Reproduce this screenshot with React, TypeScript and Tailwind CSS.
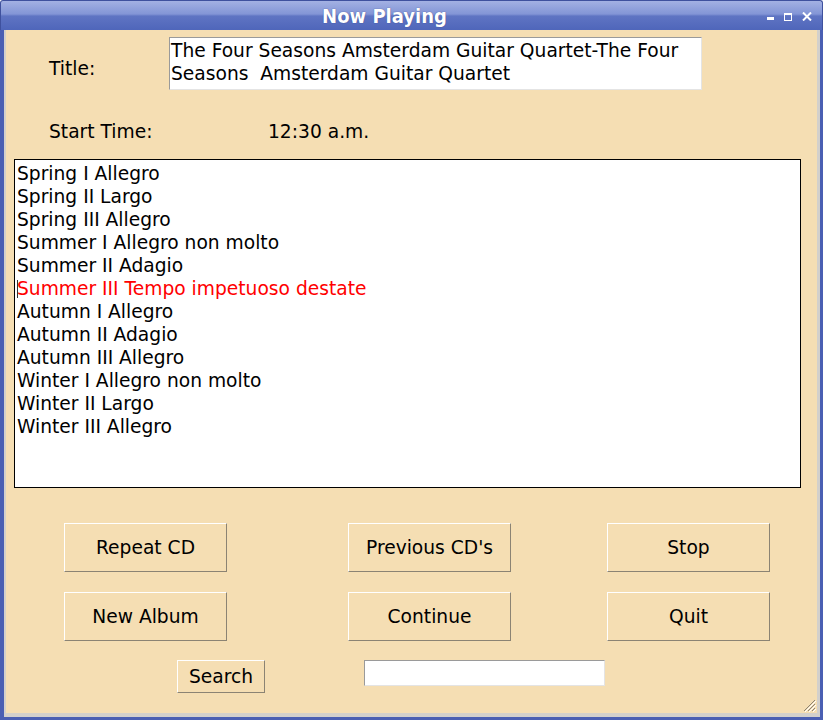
import type { ReactNode } from "react";

const tracks = [
  "Spring I Allegro",
  "Spring II Largo",
  "Spring III Allegro",
  "Summer I Allegro non molto",
  "Summer II Adagio",
  "Summer III Tempo impetuoso destate",
  "Autumn I Allegro",
  "Autumn II Adagio",
  "Autumn III Allegro",
  "Winter I Allegro non molto",
  "Winter II Largo",
  "Winter III Allegro",
];

const current = 5;

function RaisedButton({ children, className }: { children: ReactNode; className: string }) {
  return (
    <button
      type="button"
      className={`flex items-center justify-center border border-t-white border-l-white border-r-[#8b8373] border-b-[#8b8373] bg-[#f5deb3] text-black ${className}`}
    >
      {children}
    </button>
  );
}

export default function App() {
  return (
    <div
      className="w-[823px] h-[720px] flex flex-col overflow-hidden text-[18.67px] text-black"
      style={{ fontFamily: '"DejaVu Sans", Verdana, sans-serif' }}
    >
      {/* title bar */}
      <div className="relative h-[30px] shrink-0 rounded-t-[3px] flex items-center justify-center pr-[54px] bg-[linear-gradient(to_bottom,#a3b1e3_0%,#8395d6_45%,#5f74c3_52%,#4f66ba_100%)] border-x border-t border-[#3f519e]">
        <span
          className="text-white font-bold text-[20px] leading-none [text-shadow:0_0_1px_#2d3c80]"
          style={{ fontFamily: '"DejaVu Sans Condensed", "DejaVu Sans", sans-serif' }}
        >
          Now Playing
        </span>
        <div className="absolute right-[10px] top-[11px] flex items-end gap-[10px]">
          <span className="block w-[7px] h-[3px] bg-white mb-[1px]" />
          <span className="block w-[8px] h-[8px] border border-white border-t-2" />
          <svg width="10" height="9" viewBox="0 0 10 9">
            <path d="M1 0.5 L9 8.5 M9 0.5 L1 8.5" stroke="white" strokeWidth="2" />
          </svg>
        </div>
      </div>

      {/* window frame */}
      <div className="flex-1 flex flex-col bg-[#4a5fb3] pl-[4px] pr-[3px] pb-[3px]">
        <div className="relative flex-1 flex flex-col bg-[#f5deb3] border-l-2 border-r-[3px] border-b-4 border-[#d3d0cb]">
          {/* title row */}
          <div className="flex items-start mt-[7px]">
            <div className="w-[163px] pl-[43px] pt-[20px] leading-[23px]">Title:</div>
            <div className="w-[533px] h-[53px] bg-white border border-t-[#9a9a9a] border-l-[#9a9a9a] border-r-[#e4e4e4] border-b-[#e4e4e4] pl-[1px] pt-[1px] leading-[23px]">
              <div>The Four Seasons Amsterdam Guitar Quartet-The Four</div>
              <div className="whitespace-pre">Seasons  Amsterdam Guitar Quartet</div>
            </div>
          </div>

          {/* start time row */}
          <div className="flex mt-[30px] pl-[43px] leading-[23px]">
            <div className="w-[219px]">Start Time:</div>
            <div>12:30 a.m.</div>
          </div>

          {/* track list */}
          <div className="ml-[8px] mt-[16px] w-[787px] h-[329px] bg-white border border-black pt-[2px] pl-[2px] leading-[23px]">
            {tracks.map((t, i) => (
              <div key={t} className={`relative ${i === current ? "text-[#ff0000]" : ""}`}>
                {i === current && (
                  <span className="absolute left-0 top-[3px] w-px h-[18px] bg-[#333]" />
                )}
                {t}
              </div>
            ))}
          </div>

          {/* buttons */}
          <div className="flex mt-[35px]">
            <RaisedButton className="ml-[58px] w-[163px] h-[49px]">Repeat CD</RaisedButton>
            <RaisedButton className="ml-[121px] w-[163px] h-[49px]">Previous CD's</RaisedButton>
            <RaisedButton className="ml-[96px] w-[163px] h-[49px]">Stop</RaisedButton>
          </div>
          <div className="flex mt-[20px]">
            <RaisedButton className="ml-[58px] w-[163px] h-[49px]">New Album</RaisedButton>
            <RaisedButton className="ml-[121px] w-[163px] h-[49px]">Continue</RaisedButton>
            <RaisedButton className="ml-[96px] w-[163px] h-[49px]">Quit</RaisedButton>
          </div>

          {/* search row */}
          <div className="flex items-start mt-[19px]">
            <RaisedButton className="ml-[171px] w-[88px] h-[33px]">Search</RaisedButton>
            <div className="ml-[99px] w-[241px] h-[26px] bg-white border border-t-[#9a9a9a] border-l-[#9a9a9a] border-r-[#e4e4e4] border-b-[#e4e4e4]" />
          </div>

          {/* resize grip */}
          <svg
            className="absolute right-[1px] bottom-[1px]"
            width="14"
            height="14"
            viewBox="0 0 14 14"
          >
            <path d="M13 2 L2 13 M13 6 L6 13 M13 10 L10 13" stroke="#8b8373" strokeWidth="1" />
            <path d="M14 3 L3 14 M14 7 L7 14 M14 11 L11 14" stroke="#ffffff" strokeWidth="1" />
          </svg>
        </div>
      </div>
    </div>
  );
}
